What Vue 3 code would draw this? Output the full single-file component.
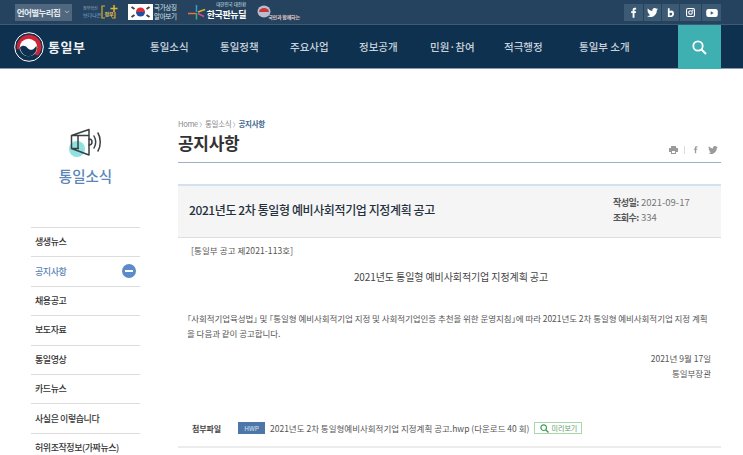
<script setup>
const nav = [
  { label: '통일소식', w: 70 },
  { label: '통일정책', w: 70 },
  { label: '주요사업', w: 69 },
  { label: '정보공개', w: 71 },
  { label: '민원·참여', w: 74 },
  { label: '적극행정', w: 75 },
  { label: '통일부 소개', w: 99 }
]
const side = ['생생뉴스', '공지사항', '채용공고', '보도자료', '통일영상', '카드뉴스', '사실은 이렇습니다', '허위조작정보(가짜뉴스)']
</script>

<template>
  <div class="page">
    <header>
      <div class="top">
        <div class="lang">언어별누리집 <svg width="6" height="4" viewBox="0 0 7 5"><path d="M1 1l2.500 2.500L6 1" fill="none" stroke="#cfd8e0"/></svg></div>
        <div class="gov">
          <div class="gov-l"><span class="gov-s">정부혁신</span><span class="gov-a">보다나은</span></div>
          <div class="gov-r">
            <svg class="bracket" width="18" height="16" viewBox="0 0 18 16"><path d="M4 2H1v12h3M11 14h3V8" fill="none" stroke="#d9a92a" stroke-width="1.200"/><path d="M13 1v7M9.500 4.500h7" stroke="#e5b52c" stroke-width="1.500"/></svg>
            <span class="gov-b">정부</span>
          </div>
        </div>
        <div class="flag">
          <div class="flag-box">
            <svg width="25" height="16" viewBox="0 0 25 16">
              <path d="M8 8a4.500 4.500 0 0 1 9 0z" fill="#d8303a"/><path d="M8 8a4.500 4.500 0 0 0 9 0z" fill="#1e4fa0"/>
              <path d="M3.500 3l3 2M3.500 13l3-2M21.500 3l-3 2M21.500 13l-3-2" stroke="#444" stroke-width="2"/>
            </svg>
          </div>
          <div class="flag-text">국가상징<br>알아보기</div>
        </div>
        <div class="newdeal">
          <svg width="18" height="16" viewBox="0 0 18 16"><path d="M0 9.500h8" stroke="#e8743b" stroke-width="1.500"/><path d="M8.500 1v7" stroke="#2fa0d8" stroke-width="1.500"/><path d="M8.500 9v6.500" stroke="#3bb273" stroke-width="1.500"/><path d="M10 8l7-2.500" stroke="#e0b12e" stroke-width="1.500"/><path d="M10 9.500l6 3" stroke="#d84a8a" stroke-width="1.500"/></svg>
          <div class="nd-text"><span class="nd-small">대한민국 대전환</span><span class="nd-big">한국판뉴딜</span></div>
        </div>
        <div class="event">
          <svg width="14" height="13" viewBox="0 0 14 13"><ellipse cx="7" cy="6.500" rx="6.500" ry="6" fill="#b9bccb"/><path d="M2 7a5 4 0 0 1 10 0z" fill="#c8343a"/></svg>
          <span class="ev-text">국민과 함께하는</span>
        </div>
        <div class="social">
          <a class="sq"><svg width="7" height="11" viewBox="0 0 8 12"><path d="M3 12V6.500H1.300V4.600H3V3.200C3 1.500 4 .700 5.300.700H7v2H6c-.7 0-.9.300-.9.800v1.100H7l-.3 1.900H5.100V12z" fill="#fff"/></svg></a>
          <a class="sq"><svg width="11" height="9" viewBox="0 0 24 20"><path d="M24 2.400c-.9.400-1.800.7-2.800.8 1-.6 1.800-1.600 2.200-2.700-1 .6-2 1-3.100 1.200A4.900 4.900 0 0 0 11.900 6.200C7.800 6 4.200 4 1.700.900A4.900 4.900 0 0 0 3.200 7.500c-.8 0-1.600-.2-2.200-.6 0 2.400 1.700 4.400 3.900 4.900-.7.200-1.500.2-2.200.1.600 2 2.400 3.400 4.600 3.400A9.900 9.900 0 0 1 0 17.800 14 14 0 0 0 21.500 5.400c1-.7 1.800-1.600 2.500-3z" fill="#fff"/></svg></a>
          <a class="sq"><svg width="7" height="9" viewBox="0 0 8 10"><path d="M1 0h2v3.400C3.500 3 4.200 2.800 5 2.800c1.700 0 3 1.400 3 3.500S6.700 10 4.800 10H1zM3 5.300v3h1.500c.8 0 1.400-.6 1.400-1.500s-.6-1.500-1.400-1.500z" fill="#fff"/></svg></a>
          <a class="sq"><svg width="9" height="9" viewBox="0 0 10 10"><rect x=".6" y=".6" width="8.800" height="8.800" rx="1.500" fill="none" stroke="#fff" stroke-width="1.200"/><circle cx="5" cy="5" r="2" fill="none" stroke="#fff" stroke-width="1.200"/><rect x="6.800" y="1.800" width="1.400" height="1.400" fill="#fff"/></svg></a>
          <a class="sq"><svg width="12" height="8" viewBox="0 0 13 9"><rect width="13" height="9" rx="2.500" fill="#fff"/><path d="M5 2.500v4l3.500-2z" fill="#3d5a75"/></svg></a>
        </div>
      </div>
      <div class="bar">
        <div class="brand">
          <svg width="30" height="30" viewBox="0 0 30 30">
            <circle cx="15" cy="15" r="14.300" fill="#0f3150" stroke="#fff" stroke-width="1"/>
            <path d="M3 17A12.300 12.300 0 1 1 24 23.500Z" fill="#cf2434"/>
            <circle cx="14.500" cy="15.500" r="8.800" fill="#fff"/>
            <path d="M6 15.500C8 13 11.500 13.500 13.500 16 15.500 18.500 19 18.500 21 15.500L22.500 14C24 19 19.500 24.300 14.500 24.300 10 24.300 6.500 20 6 15.500Z" fill="#0f3150"/>
          </svg>
          <span>통일부</span>
        </div>
        <nav>
          <a v-for="n in nav" :key="n.label" :style="{ width: n.w + 'px' }">{{ n.label }}</a>
        </nav>
        <button class="search" aria-label="검색">
          <svg width="15" height="15" viewBox="0 0 15 15"><circle cx="6" cy="6" r="4.700" fill="none" stroke="#fff" stroke-width="1.800"/><path d="M9.500 9.500l4.500 4.500" stroke="#fff" stroke-width="2"/></svg>
        </button>
      </div>
    </header>

    <div class="content">
      <aside>
        <div class="side-head">
          <svg width="36" height="30" viewBox="0 0 36 30">
            <circle cx="9" cy="21" r="8" fill="#8fe3df"/>
            <path d="M3.500 7.500L21 1.500V27L3.500 20.500Z M3.500 7.500H21 M3.500 20.500H11 M10 7.500V20.500" fill="none" stroke="#3a3f44" stroke-width="1.500" stroke-linejoin="round"/>
            <path d="M21 11a3 3 0 0 1 0 6M26 8c2 3.500 2 8.500 0 12M30 5c3 5 3 13 0 18" fill="none" stroke="#3a3f44" stroke-width="1.500" stroke-linecap="round"/>
          </svg>
          <h2>통일소식</h2>
        </div>
        <ul>
          <li v-for="s in side" :key="s" :class="{ on: s === '공지사항' }">
            <span class="li-text">{{ s }}</span>
            <i v-if="s === '공지사항'" class="minus"></i>
          </li>
        </ul>
      </aside>

      <main>
        <div class="crumb">Home <span class="gt">〉</span>통일소식 <span class="gt">〉</span><b>공지사항</b></div>
        <div class="title-row">
          <h1>공지사항</h1>
          <div class="tools">
            <svg width="9" height="8" viewBox="0 0 9 8"><path d="M2 0h5v2h2v4H7v2H2V6H0V2h2z" fill="#9a9a9a"/><path d="M3 5h3v2H3z" fill="#fff"/></svg>
            <i class="sep"></i>
            <svg class="t-f" width="5" height="9" viewBox="0 0 8 12"><path d="M3 12V6.500H1.300V4.600H3V3.200C3 1.500 4 .700 5.300.700H7v2H6c-.7 0-.9.300-.9.800v1.100H7l-.3 1.900H5.100V12z" fill="#9a9a9a"/></svg>
            <svg class="t-t" width="10" height="8" viewBox="0 0 24 20"><path d="M24 2.400c-.9.400-1.800.7-2.800.8 1-.6 1.800-1.600 2.200-2.700-1 .6-2 1-3.100 1.200A4.900 4.900 0 0 0 11.900 6.200C7.800 6 4.200 4 1.700.900A4.900 4.900 0 0 0 3.200 7.500c-.8 0-1.600-.2-2.200-.6 0 2.400 1.700 4.400 3.900 4.900-.7.200-1.500.2-2.200.1.600 2 2.400 3.400 4.600 3.400A9.900 9.900 0 0 1 0 17.800 14 14 0 0 0 21.500 5.400c1-.7 1.800-1.600 2.500-3z" fill="#9a9a9a"/></svg>
          </div>
        </div>

        <section class="card">
          <h3>2021년도 2차 통일형 예비사회적기업 지정계획 공고</h3>
          <dl>
            <div><dt>작성일:</dt> <dd>2021-09-17</dd></div>
            <div><dt>조회수:</dt> <dd>334</dd></div>
          </dl>
        </section>

        <article>
          <p class="no">[통일부 공고 제2021-113호]</p>
          <p class="center">2021년도 통일형 예비사회적기업 지정계획 공고</p>
          <p class="body">「사회적기업육성법」 및 「통일형 예비사회적기업 지정 및 사회적기업인증 추천을 위한 운영지침」에 따라 2021년도 2차 통일형 예비사회적기업 지정 계획<br>을 다음과 같이 공고합니다.</p>
          <p class="sign">2021년 9월 17일<br>통일부장관</p>
        </article>

        <div class="attach">
          <span class="a-label">첨부파일</span>
          <span class="hwp">HWP</span>
          <span class="fname">2021년도 2차 통일형예비사회적기업 지정계획 공고.hwp (다운로드 40 회)</span>
          <span class="preview">
            <svg width="9" height="9" viewBox="0 0 9 9"><circle cx="3.700" cy="3.700" r="2.800" fill="none" stroke="#3f9a57" stroke-width="1.200"/><path d="M5.800 5.800l2.700 2.700" stroke="#3f9a57" stroke-width="1.400"/></svg>
            미리보기
          </span>
        </div>
      </main>
    </div>
  </div>
</template>

<style>
html, body { margin: 0; background: #fff; overflow: hidden; }
</style>

<style scoped>
.page {
  width: 743px;
  height: 455px;
  overflow: hidden;
  font-family: "Noto Sans CJK KR", "Noto Sans", sans-serif;
  color: #333;
  background: #fff;
}
.top {
  height: 25px;
  box-sizing: border-box;
  background: #25435f;
  border-bottom: 1px solid #3f5a74;
  display: flex;
  align-items: center;
  color: #fff;
  position: relative;
}
.lang {
  margin-left: 15px;
  width: 57px;
  height: 17px;
  background: #4f6880;
  color: #e6ebf0;
  font-size: 8.500px;
  font-weight: 700;
  letter-spacing: -.6px;
  display: flex;
  align-items: center;
  justify-content: center;
  gap: 4px;
  white-space: nowrap;
}
.gov { margin-left: 11px; width: 34px; height: 18px; display: flex; align-items: center; }
.gov-l { display: flex; flex-direction: column; width: 18px; }
.gov-s { font-size: 4px; line-height: 6px; color: #9fb4c6; white-space: nowrap; }
.gov-a { font-size: 5px; line-height: 8px; color: #7fb6e0; white-space: nowrap; }
.gov-r { position: relative; width: 16px; height: 16px; display: flex; align-items: center; justify-content: center; }
.bracket { position: absolute; left: 0; top: 0; }
.gov-b { font-size: 5px; font-weight: 700; color: #e8c35a; white-space: nowrap; padding-top: 2px; }
.flag { margin-left: 11px; display: flex; align-items: center; gap: 1px; }
.flag-box { width: 25px; height: 16px; background: #fff; display: flex; }
.flag-text { font-size: 6.500px; line-height: 9.500px; color: #dfe5ea; letter-spacing: -.3px; white-space: nowrap; }
.newdeal { margin-left: 11px; display: flex; align-items: center; gap: 1px; }
.nd-text { display: flex; flex-direction: column; align-items: flex-end; margin-bottom: 2px; }
.nd-small { font-size: 4.500px; line-height: 7px; color: #dfe5ea; white-space: nowrap; }
.nd-big { font-size: 9px; line-height: 13px; font-weight: 700; color: #fff; white-space: nowrap; letter-spacing: -.4px; }
.event { margin-left: 11px; width: 44px; display: flex; align-items: flex-start; height: 15px; position: relative; }
.ev-text { position: absolute; left: 11px; bottom: 0; font-size: 5px; line-height: 7px; color: #e3c9c9; white-space: nowrap; font-weight: 700; letter-spacing: -.2px; }
.social { position: absolute; left: 624px; top: 4px; display: flex; gap: 1px; }
.sq { width: 17px; height: 17px; background: #3d5a75; display: flex; align-items: center; justify-content: center; }
.sq:nth-child(1) { width: 19px; }
.sq:nth-child(4) { width: 21px; }
.sq:nth-child(5) { width: 19px; }
.bar {
  height: 44px;
  box-sizing: border-box;
  background: #0f3150;
  border-bottom: 1px solid #8a9bab;
  display: flex;
  align-items: center;
  position: relative;
}
.brand { margin-left: 14px; width: 116px; display: flex; align-items: center; gap: 4px; color: #eef2f5; font-size: 13px; font-weight: 700; letter-spacing: .6px; }
.brand svg { flex: none; }
nav { display: flex; margin-left: 20px; }
nav a { color: #c9d3dc; font-size: 10.500px; font-weight: 500; white-space: nowrap; }
.search {
  position: absolute;
  left: 678px;
  top: 0;
  width: 43px;
  height: 44px;
  border: 0;
  padding: 0;
  background: #3eb0b2;
  display: flex;
  align-items: center;
  justify-content: center;
}
.content { display: flex; }
aside { width: 109px; margin: 0 38px 0 31px; flex: none; }
.side-head { height: 158px; display: flex; flex-direction: column; align-items: center; padding-top: 59px; box-sizing: border-box; }
.side-head h2 { margin: 8px 0 0; font-size: 14.500px; line-height: 20px; font-weight: 500; color: #5b86b8; }
ul { list-style: none; margin: 0; padding: 0; }
li {
  height: 29.400px;
  box-sizing: border-box;
  border-top: 1px solid #dcdcdc;
  display: flex;
  align-items: center;
  justify-content: space-between;
  padding: 0 4px 1px 4px;
  font-size: 9px;
  font-weight: 500;
  letter-spacing: -.45px;
  color: #333;
  white-space: nowrap;
}
li.on { color: #5b86b8; }
.minus { width: 14px; height: 14px; border-radius: 50%; background: #5b8cc8; position: relative; }
.minus::after { content: ""; position: absolute; left: 3px; right: 3px; top: 6px; height: 2px; background: #fff; }
main { width: 543px; flex: none; padding-top: 49px; }
.crumb { font-size: 7.500px; line-height: 12px; color: #888; letter-spacing: -.3px; white-space: nowrap; }
.crumb b { color: #44688f; font-weight: 700; }
.gt { font-size: 6px; margin-right: 0; }
.title-row { border-bottom: 1px solid #9ab0c6; display: flex; justify-content: space-between; align-items: flex-start; box-sizing: border-box; height: 32px; }
h1 { margin: 0; font-size: 17px; line-height: 24px; font-weight: 700; color: #333; letter-spacing: -.3px; }
.tools { display: flex; align-items: center; padding: 14px 3px 0 0; }
.sep { width: 1px; height: 8px; background: #ddd; margin: 0 8px 0 6px; }
.t-f { margin-right: 10px; }
.card {
  margin-top: 21px;
  height: 54px;
  box-sizing: border-box;
  background: #f5f5f5;
  border-top: 2px solid #d3e2f0;
  border-bottom: 1px solid #dedede;
  display: flex;
  align-items: center;
  justify-content: space-between;
  padding: 0 31px 3px 11px;
}
h3 { margin: 0 0 2px; font-size: 12px; font-weight: 500; color: #26303c; letter-spacing: -.4px; white-space: nowrap; }
dl { margin: 0; font-size: 9.500px; line-height: 14px; width: 77px; color: #777; }
dl div { white-space: nowrap; }
dt { display: inline; font-weight: 700; color: #555; letter-spacing: -.5px; font-size: 9px; }
dd { display: inline; margin: 0; }
article { font-size: 8.500px; color: #555; }
article p { margin: 0; }
.no { padding: 6px 0 0 13px; line-height: 13px; letter-spacing: .1px; }
.center { margin-top: 13px !important; text-align: center; font-size: 10px; line-height: 14px; color: #444; padding-left: 3px; letter-spacing: -.1px; }
.body { margin: 27px 0 0 9px !important; line-height: 15px; letter-spacing: -.05px; white-space: nowrap; font-feature-settings: "palt"; }
.sign { margin-top: 10px !important; text-align: right; padding-right: 10px; line-height: 15px; }
.attach { margin-top: 41px; height: 24px; display: flex; align-items: flex-start; border-bottom: 2px solid #ececec; box-sizing: content-box; }
.a-label { margin-left: 14px; width: 46px; font-weight: 700; color: #444; line-height: 14px; font-size: 8px; letter-spacing: -.1px; }
.hwp { width: 27px; height: 12px; background: #4c77a8; color: #dce6f0; font-size: 6.500px; text-align: center; line-height: 12px; }
.fname { margin-left: 5px; color: #555; font-size: 8.500px; line-height: 12px; white-space: nowrap; }
.preview { margin-left: 5px; width: 48px; height: 12px; box-sizing: border-box; border: 1px solid #a6d8a8; color: #5d9a6a; font-size: 7px; display: flex; align-items: center; justify-content: center; gap: 3px; white-space: nowrap; }
</style>
